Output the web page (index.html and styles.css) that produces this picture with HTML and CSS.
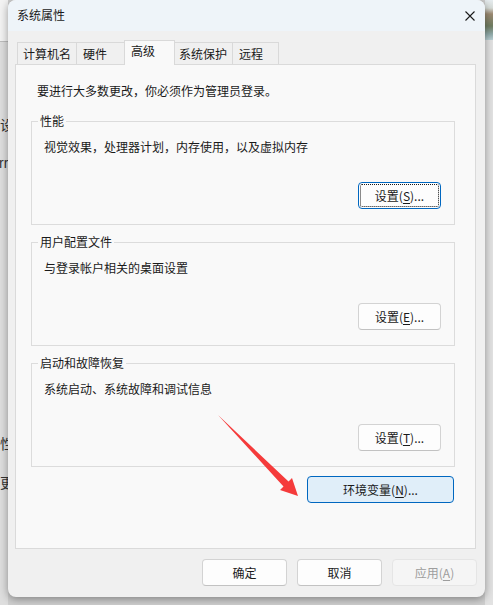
FILE: index.html
```html
<!DOCTYPE html>
<html lang="zh-CN">
<head>
    <meta charset="UTF-8">
    <meta name="viewport" content="width=device-width, initial-scale=1.0">
    <title>系统属性</title>
    <link rel="stylesheet" href="styles.css">
</head>
<body>
    <div class="desk-left">
        <div class="desk-bar"></div>
        <div class="desk-text first">设置</div>
        <div class="desk-text second">rr</div>
        <div class="desk-text third">性能</div>
        <div class="desk-text fourth">更新</div>
    </div>

    <div class="window">
        <div class="titlebar">
            <span class="title">系统属性</span>
            <svg class="close" width="10" height="10" viewBox="0 0 10 10">
                <path d="M0.5 0.5 L9.5 9.5 M9.5 0.5 L0.5 9.5" stroke="#1a1a1a" stroke-width="1.1" fill="none"/>
            </svg>
        </div>

        <div class="tabs">
            <div class="tab tab-name">计算机名</div>
            <div class="tab tab-hw">硬件</div>
            <div class="tab tab-adv active">高级</div>
            <div class="tab tab-prot">系统保护</div>
            <div class="tab tab-remote">远程</div>
        </div>

        <div class="panel">
            <p class="note">要进行大多数更改，你必须作为管理员登录。</p>

            <fieldset class="group">
                <legend>性能</legend>
                <p class="desc">视觉效果，处理器计划，内存使用，以及虚拟内存</p>
                <div class="group-actions">
                    <button class="btn focused">设置(<u>S</u>)...</button>
                </div>
            </fieldset>

            <fieldset class="group">
                <legend>用户配置文件</legend>
                <p class="desc">与登录帐户相关的桌面设置</p>
                <div class="group-actions">
                    <button class="btn">设置(<u>E</u>)...</button>
                </div>
            </fieldset>

            <fieldset class="group">
                <legend>启动和故障恢复</legend>
                <p class="desc">系统启动、系统故障和调试信息</p>
                <div class="group-actions">
                    <button class="btn">设置(<u>T</u>)...</button>
                </div>
            </fieldset>

            <div class="env-row">
                <button class="btn env">环境变量(<u>N</u>)...</button>
            </div>
        </div>

        <div class="footer">
            <button class="btn wide">确定</button>
            <button class="btn wide">取消</button>
            <button class="btn wide disabled">应用(<u>A</u>)</button>
        </div>
    </div>

    <div class="desk-right">
        <div class="photo"></div>
    </div>

    <!-- red annotation arrow pointing at the env button -->
    <svg class="arrow" width="493" height="605" viewBox="0 0 493 605">
        <path d="M218 415 L288.5 481.5 L292 478 L298 496 L280 490 L283.5 486.5 Z" fill="#f53b3b"/>
    </svg>
</body>
</html>
```

FILE: styles.css
```css
* {
    box-sizing: border-box;
}

body {
    margin: 0;
    width: 493px;
    height: 605px;
    overflow: hidden;
    position: relative;
    display: flex;
    align-items: flex-start;
    background-color: #cfcfcf;
    font-family: "Noto Sans CJK SC", "Microsoft YaHei", sans-serif;
    font-size: 12px;
    color: #1a1a1a;
}

/* desktop bits peeking out behind the dialog */
.desk-left {
    width: 8px;
    height: 605px;
    flex-shrink: 0;
    overflow: hidden;
    background-color: #dedede;
    color: #333;
    font-size: 14px;
    line-height: 16px;
}

.desk-bar {
    height: 42px;
    background-color: #f3f3f3;
    border-bottom: 1px solid #bdbdbd;
}

.desk-text {
    white-space: nowrap;
}

.desk-text.first {
    margin-top: 74px;
}

.desk-text.second {
    margin-top: 23px;
    margin-left: -1px;
    font-family: "Liberation Sans", sans-serif;
}

.desk-text.third {
    margin-top: 264px;
}

.desk-text.fourth {
    margin-top: 23px;
}

.desk-right {
    width: 8px;
    height: 605px;
    flex-shrink: 0;
    background-color: #e2e2e2;
}

.photo {
    height: 40px;
    background: linear-gradient(180deg, #e6ecef 0, #d7dcd8 8px, #9c8a72 14px, #6f7d62 26px, #8fa9a8 34px, #b9cfd3 40px);
}

/* dialog */
.window {
    position: relative;
    z-index: 1;
    width: 477px;
    height: 597px;
    flex-shrink: 0;
    display: flex;
    flex-direction: column;
    background-color: #f0f0f0;
    border-radius: 8px;
    box-shadow: 0 2px 9px rgba(0, 0, 0, 0.38);
}

.titlebar {
    height: 31px;
    display: flex;
    align-items: center;
    justify-content: space-between;
    padding: 0 10px 0 9px;
    background-color: #eef4f9;
    border-radius: 8px 8px 0 0;
}

.title {
    line-height: 16px;
    margin-top: -1px;
}

.tabs {
    height: 24px;
    margin-top: 9px;
    padding-left: 9px;
    display: flex;
    align-items: flex-end;
}

.tab {
    height: 22px;
    line-height: 21px;
    padding-left: 5px;
    margin-right: -1px;
    border: 1px solid #d9d9d9;
    border-bottom: none;
    background-color: #f0f0f0;
    white-space: nowrap;
}

.tab.active {
    position: relative;
    z-index: 1;
    height: 25px;
    line-height: 20px;
    margin-bottom: -1px;
    padding-left: 6px;
    background-color: #f9f9f9;
}

.tab-name { width: 60px; }
.tab-hw { width: 49px; padding-left: 6px; }
.tab-adv { width: 51px; }
.tab-prot { width: 59px; padding-left: 4px; }
.tab-remote { width: 47px; padding-left: 6px; }

.panel {
    width: 461px;
    height: 485px;
    margin-left: 7px;
    padding-top: 18px;
    background-color: #f9f9f9;
    border: 1px solid #dadada;
}

.note {
    margin: 0 0 14px 21px;
    line-height: 16px;
}

.group {
    margin: 0 20px 9px 15px;
    padding: 0 13px 15px 6px;
    min-width: 0;
    border: 1px solid #dcdcdc;
}

.group legend {
    padding: 0 2px;
    line-height: 16px;
}

.desc {
    margin: 10px 0 0 6px;
    line-height: 16px;
}

.group-actions {
    display: flex;
    justify-content: flex-end;
    margin-top: 27px;
}

.env-row {
    display: flex;
    justify-content: flex-end;
    margin: 8px 21px 0 0;
}

.btn {
    width: 83px;
    height: 27px;
    padding: 0;
    font-family: inherit;
    font-size: 12px;
    color: #1a1a1a;
    background-color: #fdfdfd;
    border: 1px solid #d3d3d3;
    border-bottom-color: #c2c2c2;
    border-radius: 4px;
}

.btn u {
    text-underline-offset: 2px;
}

.btn.focused {
    border-color: #0067c0;
    outline: 1px dotted #1a1a1a;
    outline-offset: -3px;
}

.btn.env {
    width: 147px;
    background-color: #e0eef9;
    border-color: #0067c0;
}

.footer {
    display: flex;
    justify-content: flex-end;
    gap: 10px;
    padding: 10px 8px 0 0;
}

.btn.wide {
    width: 85px;
}

.btn.disabled {
    color: #9d9d9d;
    background-color: #f5f5f5;
    border-color: #e5e5e5;
}

.arrow {
    position: absolute;
    left: 0;
    top: 0;
    z-index: 2;
    pointer-events: none;
}
```
